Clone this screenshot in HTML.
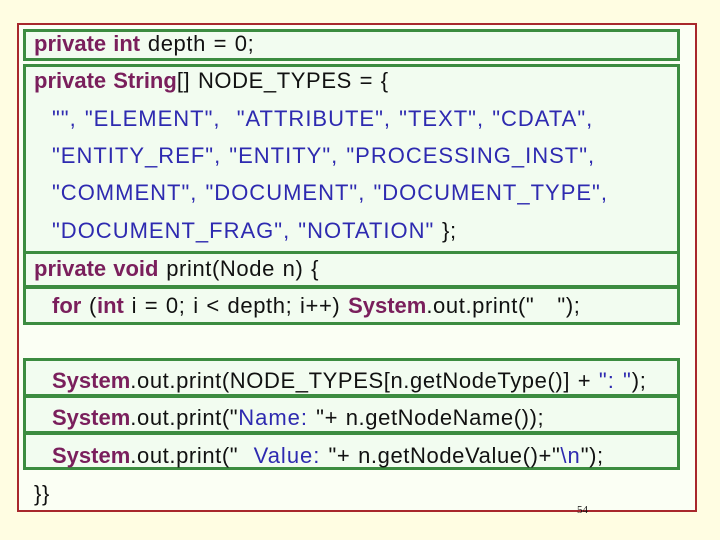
<!DOCTYPE html>
<html><head><meta charset="utf-8"><style>
body{margin:0;width:720px;height:540px;background:#fffde2;position:relative;overflow:hidden;font-family:"Liberation Sans",Arial,sans-serif;}
.red{position:absolute;left:17px;top:23px;width:680px;height:489px;border:2px solid #a8282c;background:#fbfff4;box-sizing:border-box;}
.g{position:absolute;left:23px;width:657px;border:3px solid #3c8c40;box-sizing:border-box;background:#f2fcf0;}
.t{position:absolute;font-size:22px;white-space:pre;line-height:24px;color:#111;letter-spacing:0.6px;word-spacing:1px;}
.k{color:#7a1f5c;font-weight:bold;letter-spacing:0}
.s{color:#2e2ab0;letter-spacing:1px}
</style></head><body>
<div class="red"></div>
<div class="g" style="top:29px;height:32px"></div>
<div class="g" style="top:64px;height:190px"></div>
<div class="g" style="top:251px;height:37px"></div>
<div class="g" style="top:286px;height:39px"></div>
<div class="g" style="top:358px;height:39px"></div>
<div class="g" style="top:395px;height:39px"></div>
<div class="g" style="top:432px;height:38px"></div>

<div class="t" style="left:34px;top:32px"><span class="k">private int</span> depth = 0;</div>
<div class="t" style="left:34px;top:69px"><span class="k">private String</span>[] NODE_TYPES = {</div>
<div class="t s" style="left:52px;top:107px">"", "ELEMENT",  "ATTRIBUTE", "TEXT", "CDATA",</div>
<div class="t s" style="left:52px;top:144px">"ENTITY_REF", "ENTITY", "PROCESSING_INST",</div>
<div class="t s" style="left:52px;top:181px">"COMMENT", "DOCUMENT", "DOCUMENT_TYPE",</div>
<div class="t" style="left:52px;top:219px"><span class="s">"DOCUMENT_FRAG", "NOTATION"</span> };</div>
<div class="t" style="left:34px;top:257px"><span class="k">private void</span> print(Node n) {</div>
<div class="t" style="left:52px;top:294px"><span class="k">for</span> (<span class="k">int</span> i = 0; i &lt; depth; i++) <span class="k">System</span>.out.print("   ");</div>
<div class="t" style="left:52px;top:369px"><span class="k">System</span>.out.print(NODE_TYPES[n.getNodeType()] + <span class="s">": "</span>);</div>
<div class="t" style="left:52px;top:406px"><span class="k">System</span>.out.print("<span class="s">Name: </span>"+ n.getNodeName());</div>
<div class="t" style="left:52px;top:444px"><span class="k">System</span>.out.print("  <span class="s">Value: </span>"+ n.getNodeValue()+"<span class="s">\n</span>");</div>
<div class="t" style="left:34px;top:482px">}}</div>
<div class="t" style="left:577px;top:503px;font-size:11px;line-height:14px;letter-spacing:0;font-family:'Liberation Serif',serif">54</div>
</body></html>
